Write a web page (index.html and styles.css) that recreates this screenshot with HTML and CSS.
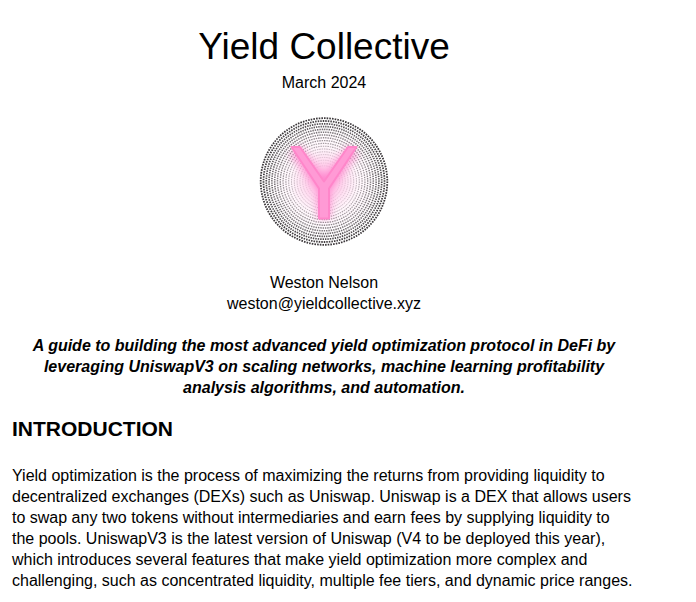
FILE: index.html
```html
<!DOCTYPE html>
<html lang="en">
<head>
<meta charset="utf-8">
<meta name="viewport" content="width=device-width, initial-scale=1">
<title>Yield Collective</title>
<link rel="stylesheet" href="styles.css">
</head>
<body>
<main class="paper">
  <header class="cover">
    <h1 class="title">Yield Collective</h1>
    <p class="date">March 2024</p>
    <svg class="logo" viewBox="0 0 130 130" role="img" aria-label="Yield Collective logo">
      <defs>
        <radialGradient id="halo">
          <stop offset="0" stop-color="#ff9fd8" stop-opacity=".9"/>
          <stop offset=".3" stop-color="#ffcdea" stop-opacity=".8"/>
          <stop offset=".55" stop-color="#fff0f9" stop-opacity=".6"/>
          <stop offset=".8" stop-color="#fff5fb" stop-opacity=".32"/>
          <stop offset="1" stop-color="#fff8fc" stop-opacity="0"/>
        </radialGradient>
        <filter id="glow" x="-50%" y="-50%" width="200%" height="200%"><feGaussianBlur stdDeviation="3.500"/></filter>
      </defs>
      <g class="rings">
        <circle r="63.3" pathLength="148" stroke-width="1.8"/>
        <circle r="60.5" pathLength="148" stroke-width="1.8" stroke-dashoffset=".5"/>
        <circle r="57.7" pathLength="148" stroke-width="1.7"/>
        <circle r="54.9" pathLength="148" stroke-width="1.7" stroke-dashoffset=".5"/>
        <circle r="52.1" pathLength="140" stroke-width="1.6"/>
        <circle r="49.3" pathLength="132" stroke-width="1.6" stroke-dashoffset=".5"/>
        <circle r="46.5" pathLength="124" stroke-width="1.5"/>
        <circle r="43.7" pathLength="116" stroke-width="1.4" stroke-dashoffset=".5"/>
        <circle r="40.9" pathLength="108" stroke-width="1.3"/>
        <circle r="38.1" pathLength="100" stroke-width="1.2" stroke-dashoffset=".5"/>
        <circle r="35.3" pathLength="94" stroke-width="1.1"/>
        <circle r="32.5" pathLength="86" stroke-width="1" stroke-dashoffset=".5"/>
        <circle r="29.7" pathLength="80" stroke-width=".9"/>
        <circle r="26.9" pathLength="72" stroke-width=".8" stroke-dashoffset=".5"/>
        <circle r="24.1" pathLength="64" stroke-width=".7"/>
        <circle r="21.3" pathLength="56" stroke-width=".6" stroke-dashoffset=".5"/>
        <circle r="18.5" pathLength="50" stroke-width=".5"/>
        <circle r="15.7" pathLength="42" stroke-width=".5" stroke-dashoffset=".5"/>
      </g>
      <circle cx="65" cy="65" r="62" fill="url(#halo)"/>
      <path class="letter-glow" filter="url(#glow)" d="M36 34L65 71L94 34M65 69V102"/>
      <path class="letter" d="M32.500 31H41L65 65.500L89 31H97.500L70 72.500V102.500H60V72.500Z"/>
    </svg>
    <address class="author">Weston Nelson<br>weston@yieldcollective.xyz</address>
    <p class="summary">A guide to building the most advanced yield optimization protocol in DeFi by<br>leveraging UniswapV3 on scaling networks, machine learning profitability<br>analysis algorithms, and automation.</p>
  </header>
  <section>
    <h2 class="heading">INTRODUCTION</h2>
    <p class="text">Yield optimization is the process of maximizing the returns from providing liquidity to<br>decentralized exchanges (DEXs) such as Uniswap. Uniswap is a DEX that allows users<br>to swap any two tokens without intermediaries and earn fees by supplying liquidity to<br>the pools. UniswapV3 is the latest version of Uniswap (V4 to be deployed this year),<br>which introduces several features that make yield optimization more complex and<br>challenging, such as concentrated liquidity, multiple fee tiers, and dynamic price ranges.</p>
  </section>
</main>
</body>
</html>
```
FILE: styles.css
```css
body {
  margin: 0;
  background: #fff;
  color: #000;
  font: 16px/21px "Liberation Sans", Arial, sans-serif;
}

h1, h2, p {
  margin: 0;
}

.paper {
  padding: 25px 60px 12px 12px;
}

.cover {
  text-align: center;
}

.title {
  font-size: 37px;
  font-weight: 400;
  line-height: 44px;
}

.date {
  margin-top: 3px;
}

.logo {
  display: block;
  width: 130px;
  margin: 23px auto 26px;
}

.rings {
  fill: none;
  stroke: #3c383b;
  stroke-dasharray: .6 .4;
  transform: translate(65px, 65.5px);
}

.letter {
  fill: #ff9ad5;
  stroke: #ff86ca;
  stroke-width: 2;
  stroke-linejoin: round;
}

.letter-glow {
  fill: none;
  stroke: #ff70c4;
  stroke-width: 14;
  opacity: .6;
}

.author {
  font-style: normal;
}

.summary {
  margin-top: 21px;
  font-weight: 700;
  font-style: italic;
}

.heading {
  margin-top: 18px;
  font-size: 21px;
  line-height: 26px;
}

.text {
  margin-top: 23px;
}
```
